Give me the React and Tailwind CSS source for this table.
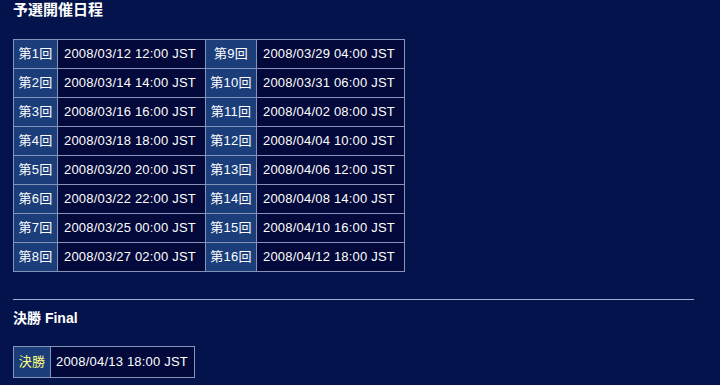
import React from "react";

const left = [
  ["第1回", "2008/03/12 12:00 JST"],
  ["第2回", "2008/03/14 14:00 JST"],
  ["第3回", "2008/03/16 16:00 JST"],
  ["第4回", "2008/03/18 18:00 JST"],
  ["第5回", "2008/03/20 20:00 JST"],
  ["第6回", "2008/03/22 22:00 JST"],
  ["第7回", "2008/03/25 00:00 JST"],
  ["第8回", "2008/03/27 02:00 JST"],
];
const right = [
  ["第9回", "2008/03/29 04:00 JST"],
  ["第10回", "2008/03/31 06:00 JST"],
  ["第11回", "2008/04/02 08:00 JST"],
  ["第12回", "2008/04/04 10:00 JST"],
  ["第13回", "2008/04/06 12:00 JST"],
  ["第14回", "2008/04/08 14:00 JST"],
  ["第15回", "2008/04/10 16:00 JST"],
  ["第16回", "2008/04/12 18:00 JST"],
];

const font = { fontFamily: '"Liberation Sans", "Noto Sans CJK JP", sans-serif' };

export default function App() {
  return (
    <div
      className="w-[720px] h-[385px] bg-[#04134b] text-white overflow-hidden pl-[13px]"
      style={font}
    >
      <div className="pt-[1px] h-[39px] text-[15px] font-bold leading-[18px]">予選開催日程</div>
      <div className="grid w-fit grid-cols-[43px_147px_50px_147px] auto-rows-[28px] gap-px bg-[#8593b8] p-px text-[13px] tracking-[0.2px]">
        {left.map((l, i) => (
          <React.Fragment key={i}>
            <div className="flex items-center justify-center bg-[#1b3e7b]">{l[0]}</div>
            <div className="flex items-center pl-[6px] bg-[#03093a]">{l[1]}</div>
            <div className="flex items-center justify-center bg-[#1b3e7b]">{right[i][0]}</div>
            <div className="flex items-center pl-[6px] bg-[#03093a]">{right[i][1]}</div>
          </React.Fragment>
        ))}
      </div>
      <div className="mt-[27px] h-px w-[681px] bg-[#a3b0d2]" />
      <div className="mt-[9px] h-[20px] text-[14px] font-bold leading-[18px]">決勝 Final</div>
      <div className="mt-[17px] grid w-fit grid-cols-[36px_143px] auto-rows-[30px] gap-px bg-[#8593b8] p-px text-[13px] tracking-[0.2px]">
        <div className="flex items-center justify-center bg-[#1b3e7b] text-[#ffff80]">決勝</div>
        <div className="flex items-center pl-[5px] bg-[#03093a]">2008/04/13 18:00 JST</div>
      </div>
    </div>
  );
}
